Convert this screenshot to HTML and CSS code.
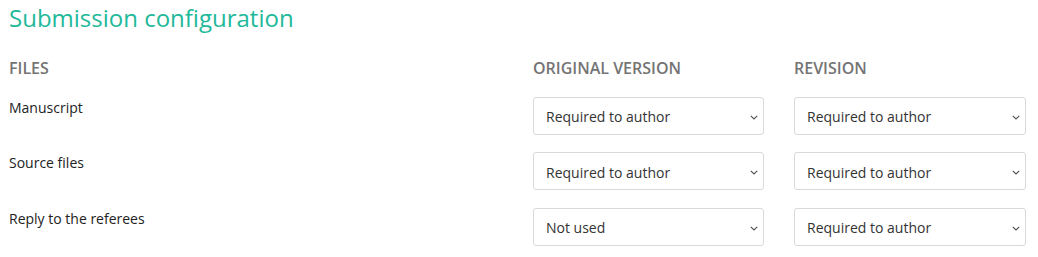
FILE: index.html
```html
<!DOCTYPE html>
<html lang="en">
<head>
<meta charset="utf-8">
<title>Submission configuration</title>
<link rel="stylesheet" href="styles.css">
</head>
<body>
<div class="page">
  <h1 class="title">Submission configuration</h1>
  <div class="grid">
    <div class="head">Files</div>
    <div class="head">Original version</div>
    <div class="head">Revision</div>

    <div class="label">Manuscript</div>
    <div class="sel"><select><option>Required to author</option><option>Not used</option></select><svg class="chev" width="8" height="5" viewBox="0 0 8 5"><path d="M0.8 0.8l3.2 3.2 3.2-3.2" fill="none" stroke="#555" stroke-width="1.2"/></svg></div>
    <div class="sel"><select><option>Required to author</option><option>Not used</option></select><svg class="chev" width="8" height="5" viewBox="0 0 8 5"><path d="M0.8 0.8l3.2 3.2 3.2-3.2" fill="none" stroke="#555" stroke-width="1.2"/></svg></div>

    <div class="label">Source files</div>
    <div class="sel"><select><option>Required to author</option><option>Not used</option></select><svg class="chev" width="8" height="5" viewBox="0 0 8 5"><path d="M0.8 0.8l3.2 3.2 3.2-3.2" fill="none" stroke="#555" stroke-width="1.2"/></svg></div>
    <div class="sel"><select><option>Required to author</option><option>Not used</option></select><svg class="chev" width="8" height="5" viewBox="0 0 8 5"><path d="M0.8 0.8l3.2 3.2 3.2-3.2" fill="none" stroke="#555" stroke-width="1.2"/></svg></div>

    <div class="label">Reply to the referees</div>
    <div class="sel"><select><option>Not used</option><option>Required to author</option></select><svg class="chev" width="8" height="5" viewBox="0 0 8 5"><path d="M0.8 0.8l3.2 3.2 3.2-3.2" fill="none" stroke="#555" stroke-width="1.2"/></svg></div>
    <div class="sel"><select><option>Required to author</option><option>Not used</option></select><svg class="chev" width="8" height="5" viewBox="0 0 8 5"><path d="M0.8 0.8l3.2 3.2 3.2-3.2" fill="none" stroke="#555" stroke-width="1.2"/></svg></div>
  </div>
</div>
</body>
</html>
```
FILE: styles.css
```css
html, body {
  margin: 0;
  padding: 0;
  background: #fff;
}
body {
  font-family: "Open Sans", "Liberation Sans", sans-serif;
  color: #222;
}
.page {
  padding: 0 12px 0 9px;
}
.title {
  margin: 0;
  padding-top: 1px;
  font-size: 24px;
  font-weight: 400;
  line-height: 34px;
  color: #22b99a;
}
.grid {
  display: grid;
  grid-template-columns: 1fr 231px 232px;
  column-gap: 30px;
  row-gap: 17.5px;
  margin-top: 22px;
}
.head {
  font-size: 16px;
  font-weight: 600;
  text-transform: uppercase;
  color: #747474;
  line-height: 22px;
  margin-bottom: 0;
}
.label {
  font-size: 14px;
  line-height: 20px;
  color: #222;
  padding-top: 1px;
}
.sel {
  position: relative;
  height: 38px;
}
.sel select {
  appearance: none;
  -webkit-appearance: none;
  width: 100%;
  height: 38px;
  margin: 0;
  padding: 2px 24px 0 12px;
  border: 1px solid #d9d9d9;
  border-radius: 3px;
  background: #fff;
  font-family: "Open Sans", "Liberation Sans", sans-serif;
  font-size: 14px;
  color: #333;
  box-sizing: border-box;
}
.chev {
  position: absolute;
  right: 6px;
  top: 18px;
  pointer-events: none;
}
```
